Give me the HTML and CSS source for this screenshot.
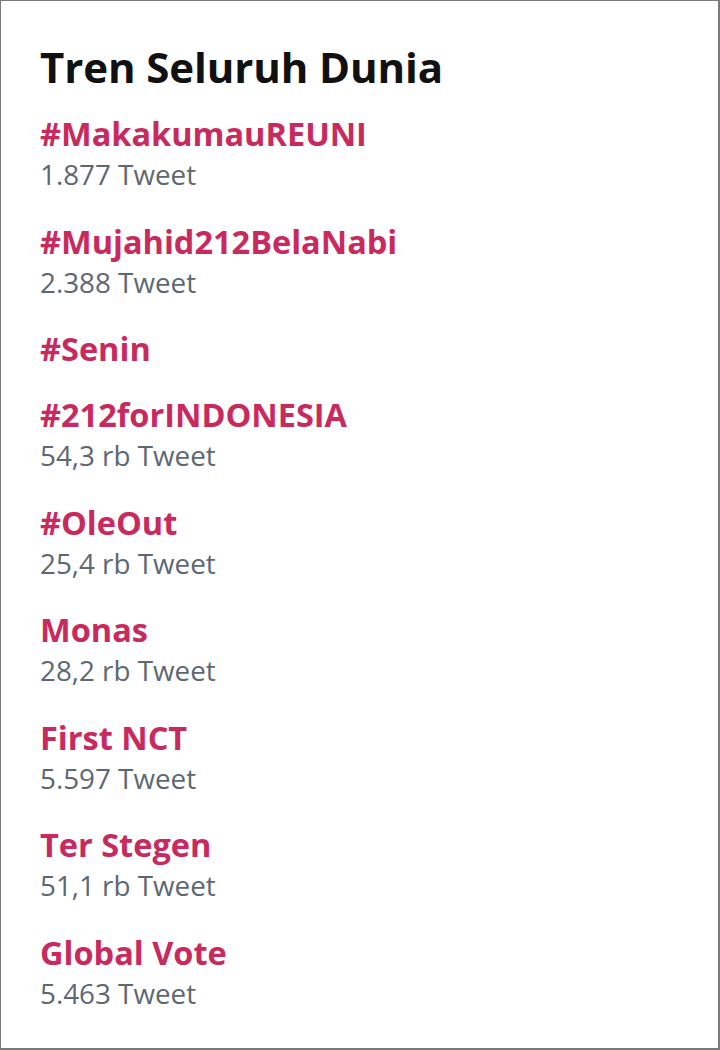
FILE: index.html
```html
<!DOCTYPE html>
<html>
<head>
<meta charset="utf-8">
<link rel="stylesheet" href="styles.css">
</head>
<body>
<div class="panel">
  <h1 class="title">Tren Seluruh Dunia</h1>
  <ul class="trends">
    <li class="trend"><div class="name">#MakakumauREUNI</div><div class="count">1.877 Tweet</div></li>
    <li class="trend"><div class="name">#Mujahid212BelaNabi</div><div class="count">2.388 Tweet</div></li>
    <li class="trend"><div class="name">#Senin</div></li>
    <li class="trend"><div class="name">#212forINDONESIA</div><div class="count">54,3 rb Tweet</div></li>
    <li class="trend"><div class="name">#OleOut</div><div class="count">25,4 rb Tweet</div></li>
    <li class="trend"><div class="name">Monas</div><div class="count">28,2 rb Tweet</div></li>
    <li class="trend"><div class="name">First NCT</div><div class="count">5.597 Tweet</div></li>
    <li class="trend"><div class="name">Ter Stegen</div><div class="count">51,1 rb Tweet</div></li>
    <li class="trend"><div class="name">Global Vote</div><div class="count">5.463 Tweet</div></li>
  </ul>
</div>
</body>
</html>
```

FILE: styles.css
```css
html, body {
  margin: 0;
  padding: 0;
  background: #ffffff;
}
.panel {
  box-sizing: border-box;
  width: 720px;
  height: 1050px;
  border-top: 1px solid #7a7a7a;
  border-left: 1px solid #7a7a7a;
  border-right: 2px solid #7a7a7a;
  border-bottom: 2px solid #7a7a7a;
  padding: 40px 20px 0 39px;
  font-family: "Open Sans", "Liberation Sans", sans-serif;
}
.title {
  margin: 0 0 21px 0;
  font-size: 42px;
  line-height: 52px;
  font-weight: 700;
  letter-spacing: -0.1px;
  color: #111111;
}
.trends {
  list-style: none;
  margin: 0;
  padding: 0;
}
.trend {
  padding-bottom: 26px;
}
.name {
  font-size: 32.5px;
  line-height: 40px;
  font-weight: 700;
  color: #c92a5e;
}
.count {
  font-size: 27.8px;
  line-height: 41.5px;
  color: #5d6873;
}
```
